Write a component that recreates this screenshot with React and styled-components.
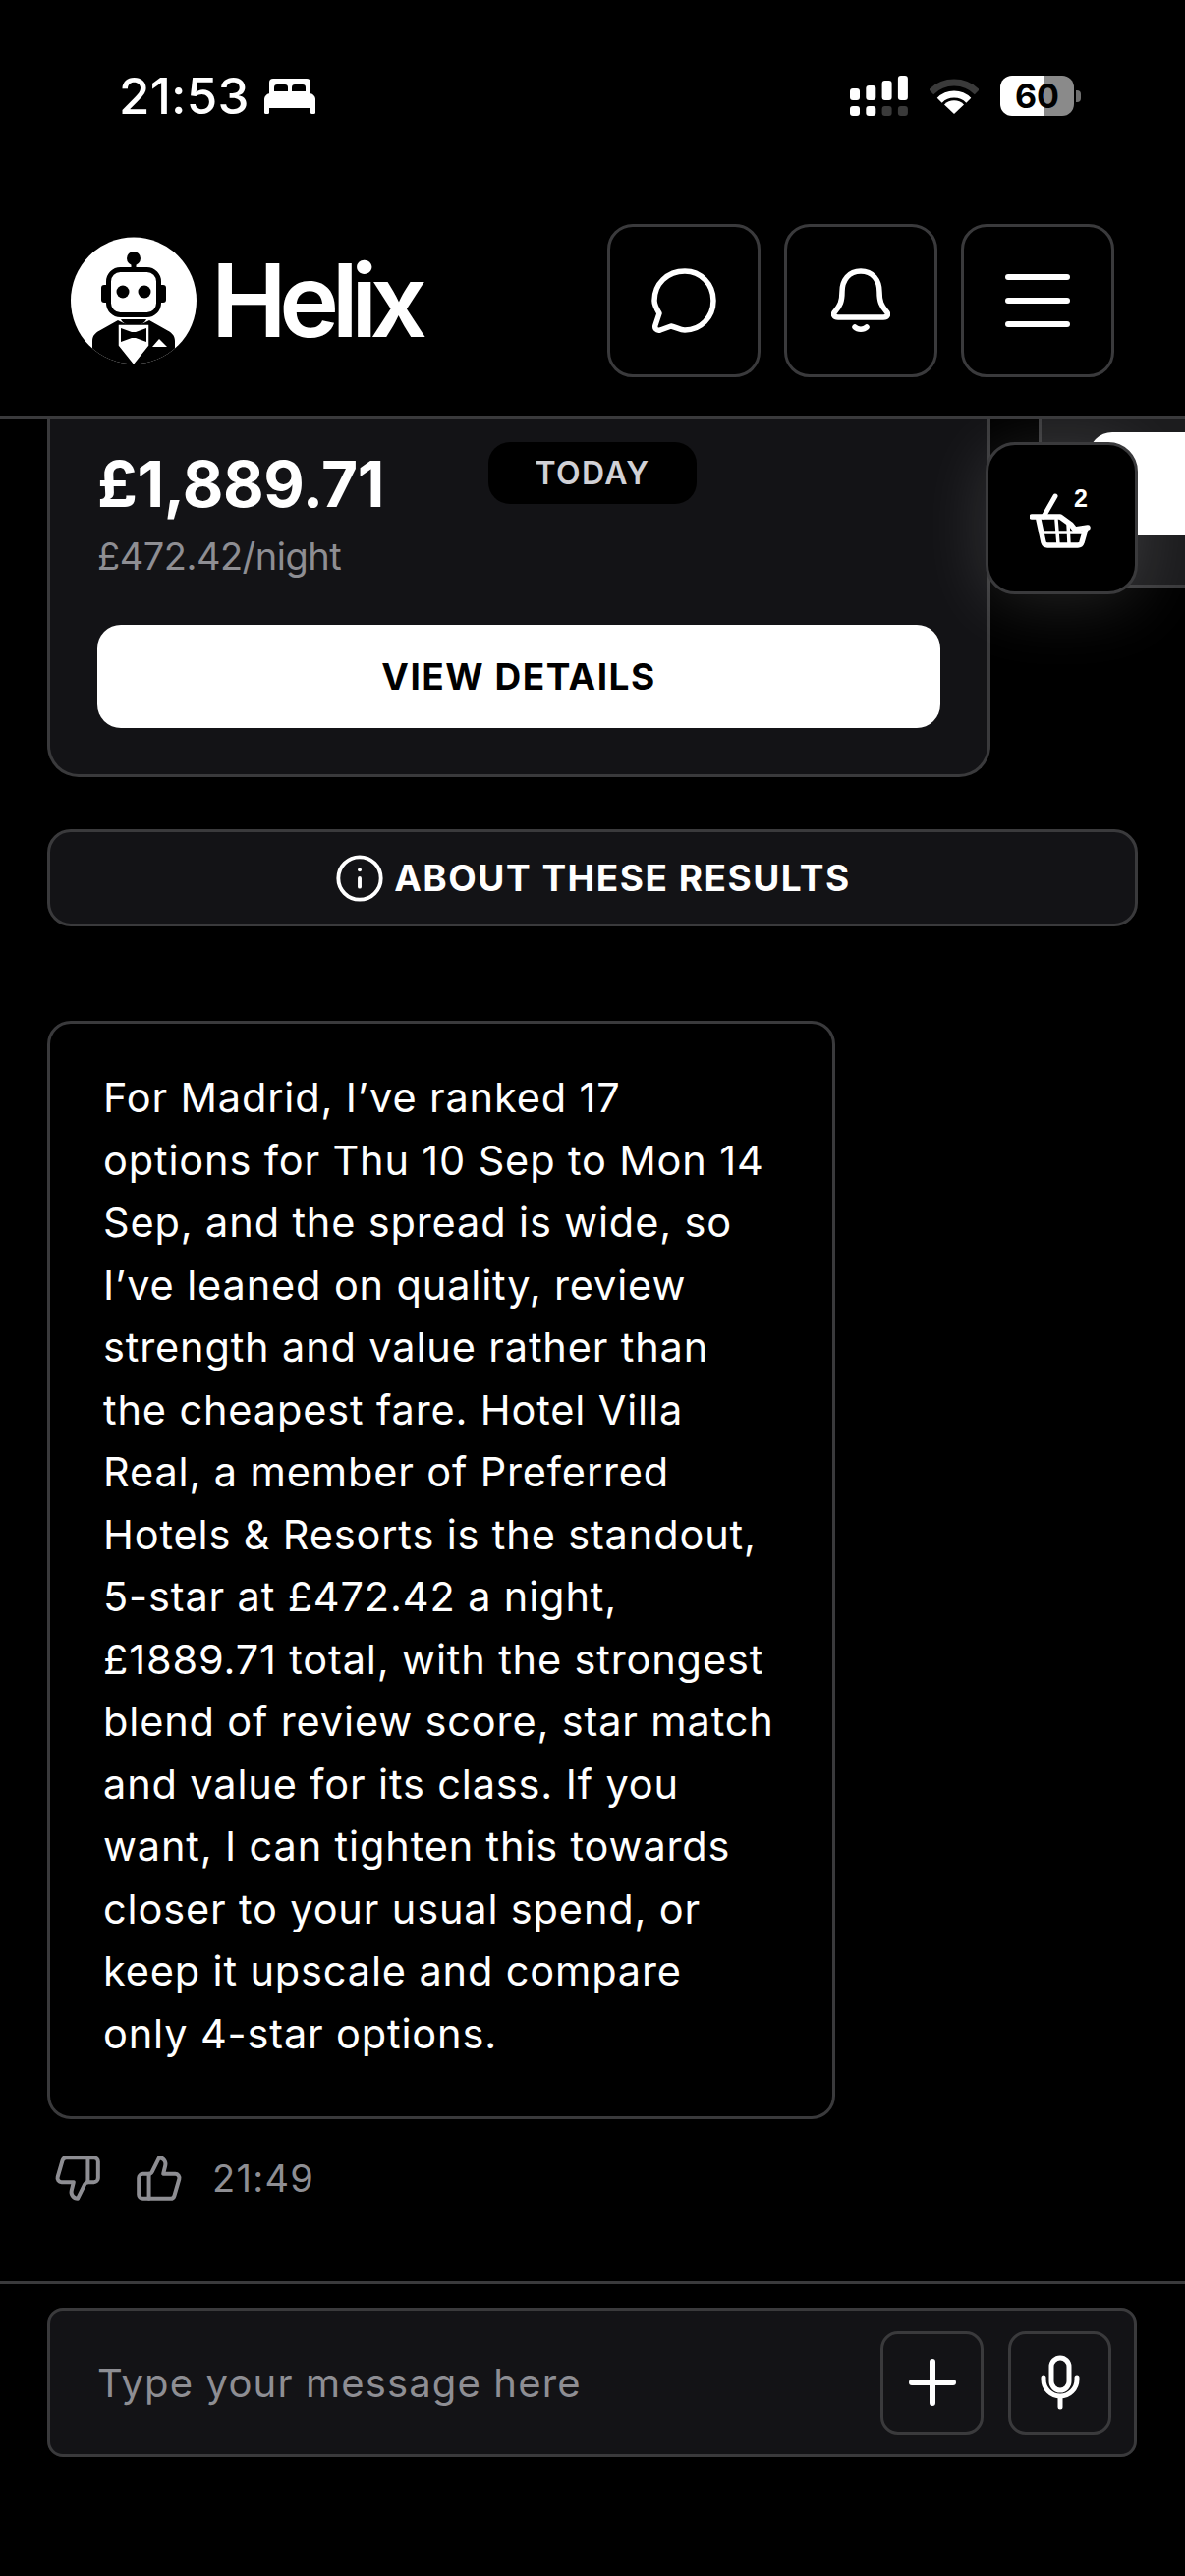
import React from "react";
import styled, { createGlobalStyle } from "styled-components";
import { Info, ThumbsDown, ThumbsUp } from "lucide-react";

const GlobalStyle = createGlobalStyle`
html, body {
    margin: 0;
    padding: 0;
    background: #000;
    font-family: Inter, "Noto Sans", sans-serif;
}
* {
    box-sizing: border-box;
}
`;

const Page = styled.div`
width: 1206px;
height: 2622px;
display: flex;
flex-direction: column;
background: #000;
color: #fff;
overflow: hidden;
`;

/* status bar */
const StatusBar = styled.div`
height: 196px;
flex-shrink: 0;
display: flex;
justify-content: space-between;
align-items: flex-start;
padding: 68px 106px 0 121px;
`;

const StatusLeft = styled.div`
display: flex;
align-items: center;
gap: 15px;
`;

const Clock = styled.span`
font-size: 51px;
line-height: 60px;
font-weight: 500;
letter-spacing: 0.2px;
`;

const StatusRight = styled.div`
display: flex;
align-items: center;
gap: 22px;
padding-top: 9px;
`;

const BatteryWrap = styled.div`
display: flex;
align-items: center;
gap: 2px;
`;

const Battery = styled.div`
width: 75px;
height: 41px;
border-radius: 12px;
background: linear-gradient(90deg, #fff 60%, #8a8a8a 60%);
color: #000;
font-size: 34px;
font-weight: 700;
display: flex;
align-items: center;
justify-content: center;
`;

const BatteryNub = styled.div`
width: 5px;
height: 12px;
border-radius: 0 4px 4px 0;
background: #6f6f6f;
`;

/* header */
const Header = styled.header`
height: 230px;
flex-shrink: 0;
display: flex;
align-items: flex-start;
justify-content: space-between;
padding: 32px 72px 0 72px;
border-bottom: 3px solid #3a3a3c;
`;

const Brand = styled.div`
display: flex;
align-items: center;
gap: 15px;
margin-top: 13px;
`;

const BrandName = styled.span`
font-size: 103px;
line-height: 128px;
font-weight: 600;
letter-spacing: -7.5px;
`;

const HeaderActions = styled.div`
display: flex;
gap: 24px;
`;

const IconButton = styled.button`
width: ${(p) => p.$size}px;
height: ${(p) => p.$size}px;
border: 3px solid #3a3a3c;
border-radius: ${(p) => p.$radius}px;
background: transparent;
color: #fff;
padding: 0;
display: flex;
align-items: center;
justify-content: center;
`;

/* chat */
const Chat = styled.main`
flex: 1;
min-height: 0;
position: relative;
display: flex;
flex-direction: column;
overflow: hidden;
`;

const Carousel = styled.div`
display: flex;
align-items: flex-start;
gap: 49px;
padding-left: 48px;
overflow: hidden;
`;

const Card = styled.article`
width: 960px;
flex-shrink: 0;
background: #131316;
border: 3px solid #3a3a3c;
border-top: none;
border-radius: 0 0 32px 32px;
padding: 24px 48px 47px 48px;
`;

const NextCard = styled.article`
width: 400px;
flex-shrink: 0;
background: #1c1c1e;
border: 3px solid #3a3a3c;
border-top: none;
border-right: none;
padding: 14px 0 47px 48px;
`;

const PriceRow = styled.div`
display: flex;
align-items: flex-start;
gap: 106px;
`;

const Price = styled.div`
font-size: 64px;
line-height: 76px;
font-weight: 700;
letter-spacing: -0.4px;
padding-top: 5px;
`;

const PerNight = styled.div`
font-size: 38px;
line-height: 46px;
color: #8e8e93;
letter-spacing: -0.5px;
margin-top: 12px;
`;

const TodayPill = styled.div`
width: 212px;
height: 63px;
border-radius: 22px;
background: #000;
color: #d1d1d6;
font-size: 32px;
font-weight: 600;
letter-spacing: 1.4px;
display: flex;
align-items: center;
justify-content: center;
`;

const PrimaryButton = styled.button`
width: 100%;
height: 105px;
margin-top: ${(p) => p.$top}px;
border: none;
border-radius: 24px;
background: #fff;
color: #000;
font-family: inherit;
font-size: 37px;
font-weight: 700;
letter-spacing: 1.5px;
`;

const BasketButton = styled.button`
position: absolute;
top: 24px;
left: 1003px;
width: 155px;
height: 155px;
border: 3px solid #3a3a3c;
border-radius: 30px;
background: #000;
padding: 0;
display: flex;
align-items: center;
justify-content: center;
box-shadow: 0 8px 70px rgba(255, 255, 255, 0.14);
`;

const BasketCount = styled.span`
position: absolute;
top: 45px;
left: 87px;
color: #fff;
font-family: inherit;
font-size: 25px;
line-height: 18px;
font-weight: 700;
`;

const AboutBar = styled.button`
height: 99px;
margin: 53px 48px 0;
background: #131316;
border: 3px solid #3a3a3c;
border-radius: 24px;
color: #fff;
font-family: inherit;
font-size: 37px;
font-weight: 700;
letter-spacing: 1.5px;
display: flex;
align-items: center;
justify-content: center;
gap: 9px;
flex-shrink: 0;
`;

const MessageBubble = styled.div`
width: 802px;
margin: 96px 0 0 48px;
padding: 44px 55px 52px 54px;
border: 3px solid #3a3a3c;
border-radius: 24px;
font-size: 41.5px;
line-height: 63.5px;
letter-spacing: 0.85px;
flex-shrink: 0;
`;

const Feedback = styled.div`
display: flex;
align-items: center;
margin: 35px 0 0 54px;
color: #8e8e93;
`;

const FeedbackIcons = styled.div`
display: flex;
gap: 33px;
`;

const Timestamp = styled.span`
font-size: 38px;
line-height: 44px;
letter-spacing: 1.3px;
margin-left: 29px;
`;

/* composer */
const Composer = styled.footer`
flex-shrink: 0;
height: 300px;
border-top: 3px solid #3a3a3c;
padding: 24px 49px 0 48px;
`;

const InputBar = styled.div`
height: 152px;
background: #131316;
border: 3px solid #3a3a3c;
border-radius: 16px;
display: flex;
align-items: center;
gap: 25px;
padding: 0 23px 0 48px;
`;

const Placeholder = styled.span`
flex: 1;
font-size: 40px;
letter-spacing: 1.15px;
color: #8e8e93;
`;

function BotLogo() {
    return (
        <svg width="128" height="130" viewBox="0 0 128 130">
            <defs>
                <clipPath id="logoClip">
                    <ellipse cx="64" cy="65" rx="64" ry="64.5" />
                </clipPath>
            </defs>
            <ellipse cx="64" cy="65" rx="64" ry="64.5" fill="#fff" />
            <g clipPath="url(#logoClip)">
                <circle cx="64" cy="22" r="7" fill="#000" />
                <rect x="61.5" y="26" width="5" height="9" fill="#000" />
                <rect x="31" y="49" width="9" height="18" rx="3" fill="#000" />
                <rect x="88" y="49" width="9" height="18" rx="3" fill="#000" />
                <rect x="38.5" y="33.5" width="51" height="46" rx="12" fill="#fff" stroke="#000" strokeWidth="5" />
                <circle cx="53" cy="56" r="6.5" fill="#000" />
                <circle cx="75" cy="56" r="6.5" fill="#000" />
                <path d="M51 84h26c-2 4-6 6-13 6s-11-2-13-6Z" fill="#000" />
                <path d="M22 130V106c0-6 4-9 10-12l16-9 16 8 16-8 16 9c6 3 10 6 10 12v24Z" fill="#000" />
                <path d="M48 89h32v22l-16 20-16-20Z" fill="#fff" stroke="#000" strokeWidth="1.5" />
                <path d="M51 93l11 4h4l11-4v14l-11-4h-4l-11 4Z" fill="#000" />
                <path d="M90 104l8 8H83Z" fill="#fff" />
            </g>
        </svg>
    );
}

function BedIcon() {
    return (
        <svg width="52" height="36" viewBox="0 0 52 36" fill="#fff">
            <path d="M9 0h34a4 4 0 0 1 4 4v13H5V4a4 4 0 0 1 4-4Z" />
            <path d="M10 9c0-2 1-3 3-3h8c2 0 3 1 3 3v4H10ZM28 9c0-2 1-3 3-3h8c2 0 3 1 3 3v4H28Z" fill="#000" />
            <path d="M6 15h40c3 0 6 3 6 6v9H0v-9c0-3 3-6 6-6Z" />
            <rect y="28" width="5" height="8" rx="1.5" />
            <rect x="47" y="28" width="5" height="8" rx="1.5" />
        </svg>
    );
}

function SignalIcon() {
    const tops = [13, 10, 5, 0];
    return (
        <svg width="59" height="41" viewBox="0 0 59 41">
            {tops.map((top, i) => (
                <rect key={i} x={i * 16.3} y={top} width="10" height={25 - top} rx="3" fill="#fff" />
            ))}
            {tops.map((_, i) => (
                <rect key={i} x={i * 16.3} y="31" width="10" height="10" rx="3" fill={i < 2 ? "#fff" : "#3a3a3a"} />
            ))}
        </svg>
    );
}

function WifiIcon() {
    return (
        <svg width="50" height="37" viewBox="0 0 50 37" fill="none">
            <path d="M1.7 14.7A33 33 0 0 1 48.3 14.7" stroke="#3a3a3a" strokeWidth="7" />
            <path d="M10.2 23.2A21 21 0 0 1 39.8 23.2" stroke="#fff" strokeWidth="7" />
            <path d="M25 37L15 27.5A14 14 0 0 1 35 27.5Z" fill="#fff" />
        </svg>
    );
}

function ChatIcon() {
    return (
        <svg width="66" height="66" viewBox="0 0 66 66" fill="none" stroke="#fff" strokeWidth="5.5" strokeLinejoin="round">
            <path d="M34 3C50 3 63 16 63 33C63 50 50 63 34 63C29 63 25 60 20 59L9 63C5 64 3 61 4 58L8 46C5 41 3 37 3 33C3 16 16 3 34 3Z" />
        </svg>
    );
}

function BellIcon() {
    return (
        <svg width="60" height="66" viewBox="0 0 60 66" fill="none" stroke="#fff" strokeWidth="5.5" strokeLinecap="round" strokeLinejoin="round">
            <path d="M30 3C18 3 11 12 11 24C11 34 9 38 4 44C1 47 3 50 7 50H53C57 50 59 47 56 44C51 38 49 34 49 24C49 12 42 3 30 3Z" />
            <path d="M24 60C27 63 33 63 36 60" />
        </svg>
    );
}

function MenuIcon() {
    return (
        <svg width="66" height="54" viewBox="0 0 66 54" fill="none" stroke="#fff" strokeWidth="6" strokeLinecap="round">
            <path d="M3 3H63M3 27H63M3 51H63" />
        </svg>
    );
}

function BasketIcon() {
    return (
        <svg width="66" height="60" viewBox="0 -3 66 60" fill="none" stroke="#fff" strokeLinecap="round" strokeLinejoin="round">
            <path d="M26 4L14 25" strokeWidth="5" />
            <path d="M2 25H31L42 33L46 38L59 36" strokeWidth="5.5" />
            <path d="M9 28L14 51Q15 54 18 54H49Q52 54 53 51L57 37" strokeWidth="5.5" />
            <path d="M11 41H56M27 28L29 53M39 32L40 53" strokeWidth="3.5" />
        </svg>
    );
}

function PlusIcon() {
    return (
        <svg width="48" height="48" viewBox="0 0 48 48" fill="none" stroke="#fff" strokeWidth="6" strokeLinecap="round">
            <path d="M24 3V45M3 24H45" />
        </svg>
    );
}

function MicIcon() {
    return (
        <svg width="40" height="56" viewBox="0 0 40 56" fill="none" stroke="#fff" strokeWidth="5" strokeLinecap="round">
            <rect x="11" y="3" width="18" height="33" rx="9" />
            <path d="M3 23V25A17 17 0 0 0 37 25V23" />
            <path d="M20 43V53" />
        </svg>
    );
}

function App() {
    return (
        <Page>
            <GlobalStyle />

            <StatusBar>
                <StatusLeft>
                    <Clock>21:53</Clock>
                    <BedIcon />
                </StatusLeft>
                <StatusRight>
                    <SignalIcon />
                    <WifiIcon />
                    <BatteryWrap>
                        <Battery>60</Battery>
                        <BatteryNub />
                    </BatteryWrap>
                </StatusRight>
            </StatusBar>

            <Header>
                <Brand>
                    <BotLogo />
                    <BrandName>Helix</BrandName>
                </Brand>
                <HeaderActions>
                    <IconButton $size={156} $radius={26}><ChatIcon /></IconButton>
                    <IconButton $size={156} $radius={26}><BellIcon /></IconButton>
                    <IconButton $size={156} $radius={26}><MenuIcon /></IconButton>
                </HeaderActions>
            </Header>

            <Chat>
                <Carousel>
                    <Card>
                        <PriceRow>
                            <div>
                                <Price>£1,889.71</Price>
                                <PerNight>£472.42/night</PerNight>
                            </div>
                            <TodayPill>TODAY</TodayPill>
                        </PriceRow>
                        <PrimaryButton $top={47}>VIEW DETAILS</PrimaryButton>
                    </Card>
                    <NextCard>
                        <PrimaryButton $top={0} />
                    </NextCard>
                </Carousel>

                <BasketButton>
                    <BasketIcon />
                    <BasketCount>2</BasketCount>
                </BasketButton>

                <AboutBar>
                    <Info size={52} strokeWidth={1.8} />
                    ABOUT THESE RESULTS
                </AboutBar>

                <MessageBubble>
                    For Madrid, I’ve ranked 17 options for Thu 10 Sep to Mon 14 Sep, and the spread is wide, so I’ve leaned on quality, review strength and value rather than the cheapest fare. Hotel Villa Real, a member of Preferred Hotels &amp; Resorts is the standout, 5-star at £472.42 a night, £1889.71 total, with the strongest blend of review score, star match and value for its class. If you want, I can tighten this towards closer to your usual spend, or keep it upscale and compare only 4-star options.
                </MessageBubble>

                <Feedback>
                    <FeedbackIcons>
                        <ThumbsDown size={50} strokeWidth={1.9} />
                        <ThumbsUp size={50} strokeWidth={1.9} />
                    </FeedbackIcons>
                    <Timestamp>21:49</Timestamp>
                </Feedback>
            </Chat>

            <Composer>
                <InputBar>
                    <Placeholder>Type your message here</Placeholder>
                    <IconButton $size={105} $radius={18}><PlusIcon /></IconButton>
                    <IconButton $size={105} $radius={18}><MicIcon /></IconButton>
                </InputBar>
            </Composer>
        </Page>
    );
}

export default App;
